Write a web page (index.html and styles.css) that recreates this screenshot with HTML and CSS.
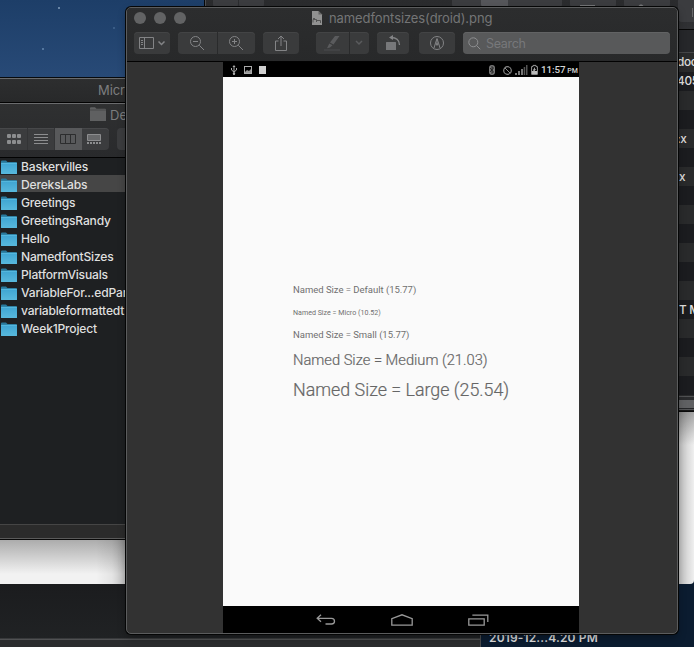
FILE: index.html
```html
<!DOCTYPE html>
<html lang="en">
<head>
<meta charset="utf-8">
<title>namedfontsizes(droid).png</title>
<link rel="stylesheet" href="styles.css">
</head>
<body>
<svg class="defs" width="0" height="0">
  <defs>
    <linearGradient id="blue" x1="0" y1="0" x2="0" y2="1"><stop offset="0" stop-color="#3fa5d2"/><stop offset="1" stop-color="#58b8dc"/></linearGradient>
    <symbol id="folder" viewBox="0 0 16 14">
      <path d="M0 1.5Q0 .5 1 .5H5L6.5 2H15Q16 2 16 3V6H0Z" fill="#28799c"/>
      <rect y="3" width="16" height="11" rx=".6" fill="url(#blue)"/>
      <path d="M0 3.3H16" stroke="#6ccbea" stroke-width=".6"/>
    </symbol>
  </defs>
</svg>
<main class="desktop">
  <div class="sky"></div>
  <div class="paper"></div>
  <div class="lower"></div>
  <div class="filename">2019-12...4.20 PM</div>

  <section class="back">
    <div class="back-tools"><i class="w1"></i><i class="w2"></i><i class="w3"></i><i class="w4"></i><i class="w5"></i><i class="w6"></i><i class="w7"></i></div>
    <div class="back-head"></div>
    <div class="back-rows">
      <p class="up">doc</p><p class="up">405</p><p></p><p></p><p class="x1">:x</p><p></p><p class="x2">x</p><p></p><p></p><p></p><p></p><p></p><p></p><p class="tm">T M</p><p></p><p></p><p></p><p></p>
    </div>
    <div class="back-scroll"></div>
  </section>

  <section class="word"><span>Micr</span></section>

  <section class="finder">
    <header>
      <div class="finder-title">
        <svg width="16" height="14" viewBox="0 0 16 14"><path d="M0 1Q0 .3 1 .3H5L6.5 1.8H15Q16 1.8 16 3V14H0Z" fill="#5f6061"/><path d="M0 3H16" stroke="#48494a"/></svg>
        <span>De</span>
      </div>
      <div class="views">
        <div class="seg">
          <b><svg width="14" height="10" fill="#8c8d8f"><rect width="4" height="4" rx="1"/><rect x="5" width="4" height="4" rx="1"/><rect x="10" width="4" height="4" rx="1"/><rect y="6" width="4" height="4" rx="1"/><rect x="5" y="6" width="4" height="4" rx="1"/><rect x="10" y="6" width="4" height="4" rx="1"/></svg></b>
          <b><svg width="14" height="10" stroke="#8c8d8f"><path d="M0 .5H14M0 3.5H14M0 6.5H14M0 9.5H14"/></svg></b>
          <b class="on"><svg width="16" height="10" fill="none" stroke="#2c2d2e"><path d="M.5.5H15.5V9.5H.5ZM5.5.5V9.5M10.5.5V9.5"/></svg></b>
          <b><svg width="14" height="10"><path d="M.5.5H13.5V6.5H.5Z" fill="#68696b" stroke="#8c8d8f"/><path d="M0 9H14" stroke="#8c8d8f" stroke-width="2" stroke-dasharray="2 1"/></svg></b>
        </div>
        <div class="next"></div>
      </div>
    </header>
    <ul>
      <li><svg><use href="#folder"/></svg><span>Baskervilles</span></li>
      <li class="sel"><svg><use href="#folder"/></svg><span>DereksLabs</span></li>
      <li><svg><use href="#folder"/></svg><span>Greetings</span></li>
      <li><svg><use href="#folder"/></svg><span>GreetingsRandy</span></li>
      <li><svg><use href="#folder"/></svg><span>Hello</span></li>
      <li><svg><use href="#folder"/></svg><span>NamedfontSizes</span></li>
      <li><svg><use href="#folder"/></svg><span>PlatformVisuals</span></li>
      <li><svg><use href="#folder"/></svg><span>VariableFor...edPar</span></li>
      <li><svg><use href="#folder"/></svg><span>variableformattedt</span></li>
      <li><svg><use href="#folder"/></svg><span>Week1Project</span></li>
    </ul>
    <footer></footer>
  </section>

  <section class="preview">
    <header>
      <div class="titlebar">
        <div class="lights"><i></i><i></i><i></i></div>
        <div class="title">
          <svg width="10" height="14"><path d="M0 0H6.5L10 3.5V14H0Z" fill="#919191"/><path d="M6.5 0V3.5H10Z" fill="#626262"/><path d="M1 11.5V8.5H4.5V11M4.5 9.5H8.5V12M1 7.5H3" fill="none" stroke="#555"/></svg>
          <span>namedfontsizes(droid).png</span>
        </div>
      </div>
      <div class="tools">
        <button class="side"><svg width="27" height="12" fill="none" stroke="#838486"><path d="M.5.5H14.5V11.5H.5ZM5.5.5V11.5M2 3.5H4M2 5.5H4M2 7.5H4"/><path d="M19.5 4.5L22.5 7.5L25.5 4.5" stroke-width="1.5"/></svg></button>
        <div class="pair">
          <button><svg width="16" height="16" fill="none" stroke="#838486"><circle cx="6.5" cy="6.5" r="5"/><path d="M10.3 10.3L15 15M4 6.5H9"/></svg></button>
          <button><svg width="16" height="16" fill="none" stroke="#838486"><circle cx="6.5" cy="6.5" r="5"/><path d="M10.3 10.3L15 15M4 6.5H9M6.5 4V9"/></svg></button>
        </div>
        <button class="share"><svg width="12" height="16" fill="none" stroke="#838486"><path d="M3.5 6H.5V15.5H11.5V6H8.5M6 11V1M3 4L6 1L9 4"/></svg></button>
        <div class="pen">
          <button><svg width="18" height="16"><path d="M12 1H16.5L10.5 9.5L7 7.5ZM6.3 8.4L9.5 10.3L7 12.5L4 13.3Z" fill="#5a5b5d"/><path d="M1 15H17" stroke="#4b4c4e"/></svg></button>
          <button><svg width="8" height="6" fill="none" stroke="#5a5b5d" stroke-width="1.5"><path d="M1 1L4 4L7 1"/></svg></button>
        </div>
        <button class="rotate"><svg width="15" height="16"><rect y="7" width="10" height="8" rx=".6" fill="#77787a"/><path d="M5 2.5C10 2.5 13.5 4.5 13.5 10" fill="none" stroke="#838486" stroke-width="1.3"/><path d="M3 2.5L7 0V5Z" fill="#838486"/></svg></button>
        <button class="mark"><svg width="14" height="14" fill="none" stroke="#838486"><circle cx="7" cy="7" r="6.5"/><path d="M4 12L5.5 7L7 2.5L8.5 7L10 12M7 3V8" /><circle cx="7" cy="8.4" r=".8" fill="#838486"/></svg></button>
        <div class="search"><svg width="13" height="13" fill="none" stroke="#8e8f91"><circle cx="5.3" cy="5.3" r="4.5"/><path d="M8.6 8.6L12.3 12.3"/></svg><span>Search</span></div>
      </div>
    </header>
    <div class="canvas">
      <div class="phone">
        <div class="status">
          <svg width="38" height="10">
            <g fill="none" stroke="#aaa"><path d="M5 1V10M2.5 3V5L5 7L7.5 5V3"/><rect x="15.5" y="1.5" width="7" height="7"/></g><circle cx="5" cy="8.7" r="1.2" fill="#aaa"/><path d="M3.5 2L5 0L6.5 2Z" fill="#aaa"/><path d="M16 7L18 5L20 6L22 4V8H16Z" fill="#999"/><rect x="30" y="1" width="7" height="8" fill="#d0d0d0"/>
          </svg>
          <span class="fill"></span>
          <svg width="50" height="11">
            <rect x="1" y="0" width="6" height="10" rx="3" fill="#777"/><path d="M2 3L5.5 7L4 8.5V1.5L5.5 3L2 7" fill="none" stroke="#151515" stroke-width=".8"/>
            <circle cx="19.5" cy="5.5" r="3.8" fill="none" stroke="#888" stroke-width="1.2"/><path d="M17 3L22 8" stroke="#888"/>
            <g fill="#777"><rect x="27" y="8" width="2" height="2"/><rect x="30" y="6" width="2" height="4"/><rect x="33" y="4" width="2" height="6"/></g><rect x="35.7" y="2" width="1.5" height="8" fill="#555"/><rect x="38" y="0" width="1.5" height="10" fill="#555"/>
            <path d="M43.6 1.6H45V.4H48V1.6H49.4V9.4H43.6Z" fill="none" stroke="#999"/><rect x="44" y="6" width="5" height="3" fill="#bbb"/><path d="M45 5L47 2V4H48L46 7Z" fill="#aaa"/>
          </svg>
          <span class="clock">11:57 <small>PM</small></span>
        </div>
        <div class="labels">
          <p class="default"><span>Named Size = Default (15.77)</span></p>
          <p class="micro"><span>Named Size = Micro (10.52)</span></p>
          <p class="small"><span>Named Size = Small (15.77)</span></p>
          <p class="medium"><span>Named Size = Medium (21.03)</span></p>
          <p class="large"><span>Named Size = Large (25.54)</span></p>
        </div>
        <div class="nav">
          <svg width="20" height="12" fill="none" stroke="#999" stroke-width="1.3"><path d="M5 .8L1.2 4.3L5 7.8M1.5 4.3H15.5Q18.5 4.3 18.5 7.3Q18.5 10 15.5 10H9.5"/></svg>
          <svg width="22" height="12" fill="none" stroke="#999" stroke-width="1.3"><path d="M.8 11.2V4.6L11 .8L21.2 4.6V11.2Z"/></svg>
          <svg width="21" height="12" fill="none" stroke="#999" stroke-width="1.3"><path d="M.8 4.8H16.2V11.2H.8ZM5 1.8V1.2H19.8V8"/></svg>
        </div>
      </div>
    </div>
  </section>
</main>
</body>
</html>
```
FILE: styles.css
```css
* { box-sizing: border-box; }
body { margin: 0; font-family: Inter, "Liberation Sans", sans-serif; }
p, ul { margin: 0; padding: 0; }
svg { display: block; flex: none; overflow: visible; }
.defs { position: absolute; }
button { border: 0; padding: 0; font: inherit; }

.desktop { position: relative; width: 694px; height: 647px; overflow: hidden; background: #0b1c30; }
.sky {
  position: absolute; left: 0; top: 0; width: 205px; height: 78px;
  background:
    radial-gradient(circle at 59px 8px, #7894b2 0 .6px, transparent 1.2px),
    radial-gradient(circle at 43px 49px, #5e81a8 0 .6px, transparent 1.2px),
    radial-gradient(circle at 114px 28px, #4b6f98 0 .5px, transparent 1px),
    linear-gradient(#1d3e68, #284a77);
}
.paper {
  position: absolute; left: 0; top: 410px; width: 694px; height: 174px;
  border-radius: 0 0 4px 0;
  background:
    linear-gradient(90deg, transparent 96px, rgba(0,0,0,.06) 112px, rgba(0,0,0,.22) 126px, rgba(0,0,0,.22) 678px, transparent 694px),
    linear-gradient(#a0a0a0, #f0f0f0 35px) 678px 0 / 16px 174px no-repeat,
    linear-gradient(#acacac 130px, #f2f2f2 164px);
}
.lower {
  position: absolute; left: 0; top: 584px; width: 481px; height: 63px;
  border-right: 1px solid #4b4c4e;
  background: linear-gradient(#1b1c1e, #202224 54px, #505153 55px, #505153 56px, #2b2c2e 56px);
}
.filename {
  position: absolute; left: 489px; top: 630px;
  color: #dedede; font-size: 12px; line-height: 16px; font-weight: 600; letter-spacing: .15px; white-space: nowrap;
}

.back {
  position: absolute; left: 204px; top: 0; width: 490px; height: 412px;
  display: flex; flex-direction: column;
  border-left: 1px solid #060708; border-bottom: 1px solid #0a0a0a;
  background: #202124; overflow: hidden;
}
.back-tools { height: 30px; flex: none; display: flex; background: linear-gradient(#2a2b2d, #303134); border-bottom: 1px solid #050505; border-left: 1px solid #4d4e50; }
.back-tools i { flex: none; height: 8px; background: #3b3c3f; border-radius: 0 0 4px 4px; }
.back-tools .w1 { width: 25px; margin-left: 7px; }
.back-tools .w2 { width: 25px; margin-left: 1px; }
.back-tools .w3 { width: 29px; margin-left: 188px; }
.back-tools .w4 { width: 81px; background: linear-gradient(90deg, #55565a 27px, #3b3c3f 27px); }
.back-tools .w5 { width: 46px; margin-left: 8px; background: linear-gradient(#747577, #747577) 10px 5px / 15px 1px no-repeat, #3b3c3f; }
.back-tools .w6 { width: 46px; margin-left: 8px; background: radial-gradient(circle at 17px 7px, #77787a 0 2px, #3b3c3f 3px); }
.back-tools .w7 { width: 40px; height: 22px; margin-left: 8px; background: linear-gradient(#67686a, #67686a) 14px 8px / 1px 9px no-repeat, #3b3c3f; }
.back-head { height: 23px; flex: none; background: #26272a; border-bottom: 1px solid #454648; }
.back-rows { height: 343px; flex: none; overflow: hidden; background: repeating-linear-gradient(#292a2b 0 19px, #1b1c1f 19px 38px); }
.back-rows p { height: 19px; padding-left: 473px; color: #dedede; font-size: 11.8px; line-height: 20px; font-weight: 500; letter-spacing: -.3px; white-space: nowrap; }
.back-rows .up { line-height: 18px; padding-left: 472px; }
.back-rows .x1 { padding-left: 472px; }
.back-rows .x2 { padding-left: 474px; }
.back-rows .tm { padding-left: 474px; }
.back-scroll { height: 15px; background: linear-gradient(#505153 0 1px, #2a2b2d 1px 4px, #606163 4px 12px, #252628 12px 13px, #535456 13px 14px, #161616 14px); }

.word {
  position: absolute; left: 0; top: 77px; width: 126px; height: 26px;
  border-top: 1px solid #080a0c; border-bottom: 1px solid #020202;
  background: linear-gradient(#6a6b6c 0 1px, #2d2e2f 1px, #28292a);
  color: #7d7e7f; overflow: hidden;
}
.word span { display: block; padding-left: 98px; font-size: 13px; line-height: 24px; letter-spacing: -.1px; }

.finder { position: absolute; left: 0; top: 103px; width: 126px; height: 437px; display: flex; flex-direction: column; overflow: hidden; background: #1e2022; border-bottom: 1px solid #090909; }
.finder header { height: 55px; flex: none; background: linear-gradient(#2f3031, #292a2c); border-top: 1px solid #6b6c6e; border-bottom: 1px solid #020202; }
.finder-title { display: flex; gap: 4px; padding: 3px 0 0 90px; height: 24px; color: #7c7d7e; font-size: 13px; line-height: 16px; }
.views { display: flex; gap: 8px; }
.seg { display: flex; width: 109px; height: 22px; flex: none; border-radius: 0 4px 4px 0; overflow: hidden; background: #3b3c3e; box-shadow: inset 0 1px #47484a; }
.seg b { width: 27px; display: flex; align-items: center; justify-content: center; border-right: 1px solid #333436; }
.seg b:first-child { width: 28px; }
.seg b:last-child { border: 0; width: 24px; }
.seg .on { background: #58595b; border-color: #58595b; }
.next { width: 20px; height: 22px; flex: none; border-radius: 4px; background: #3b3c3e; }
.finder ul { height: 366px; flex: none; list-style: none; }
.finder li { display: flex; align-items: flex-start; gap: 4px; height: 18px; padding-left: 1px; color: #dfdfdf; font-size: 12.1px; line-height: 18px; font-weight: 500; letter-spacing: -.2px; white-space: nowrap; }
.finder li svg { width: 16px; height: 14px; margin-top: 2px; }
.finder .sel { background: linear-gradient(#464646, #464646) 0 0 / 100% 17px no-repeat; margin-top: -1px; padding-top: 1px; height: 19px; }
.finder footer { height: 15px; background: #2b2b2b; border-top: 1px solid #454545; border-bottom: 1px solid #5b5b5b; }

.preview {
  position: absolute; left: 126px; top: 7px; width: 552px; height: 627px;
  border: 1px solid #5b5c5d; border-radius: 5px; overflow: hidden;
  box-shadow: 0 0 0 1px #050606, 0 4px 8px rgba(0,0,0,.3);
  background: #323232;
}
.preview > header { height: 54px; border-bottom: 1px solid #020202; background: linear-gradient(#2c2d2e, #28292a); }
.titlebar { display: flex; height: 24px; align-items: flex-start; }
.lights { display: flex; gap: 8px; padding: 4px 0 0 7px; width: 185px; }
.lights i { width: 12px; height: 12px; border-radius: 50%; background: #626364; }
.title { display: flex; gap: 7px; padding-top: 3px; color: #747576; font-size: 13px; line-height: 15px; letter-spacing: -.09px; white-space: nowrap; }
.tools { display: flex; padding-left: 7px; }
.tools button, .pair, .pen { height: 22px; }
.tools button { display: flex; align-items: center; justify-content: center; border-radius: 4px; background: #3a3b3c; box-shadow: inset 0 1px #434445; }
.side { width: 36px; }
.pair { display: flex; gap: 1px; margin-left: 8px; }
.pair button { width: 37px; }
.tools .pair button:first-child { width: 39px; border-radius: 4px 0 0 4px; }
.tools .pair button:last-child { border-radius: 0 4px 4px 0; }
.pair svg { margin-right: 1px; }
.share { width: 36px; margin-left: 8px; }
.pen { display: flex; gap: 1px; margin-left: 17px; }
.pen button:first-child { width: 33px; }
.pen button:last-child { width: 19px; }
.tools .pen button:first-child { border-radius: 4px 0 0 4px; }
.tools .pen button:last-child { border-radius: 0 4px 4px 0; }
.pen button:first-child svg, .pen button:last-child svg { margin-right: 2px; }
.rotate { width: 32px; margin-left: 8px; }
.mark { width: 36px; margin-left: 10px; }
.search { display: flex; align-items: center; gap: 5px; width: 207px; height: 22px; margin-left: 8px; padding-left: 5px; border-radius: 4px; background: #58595a; box-shadow: inset 0 1px #626364; color: #77787a; font-size: 12.5px; letter-spacing: -.3px; }

.canvas { padding-left: 96px; }
.phone { width: 356px; height: 571px; display: flex; flex-direction: column; background: #fafafa; }
.status { display: flex; height: 15px; flex: none; align-items: center; padding: 1px 2px 0 6px; background: #000; color: #d5d5d5; font-family: Roboto, sans-serif; }
.fill { flex: 1; }
.clock { display: flex; align-items: baseline; gap: 2px; margin-left: 3px; width: 36px; font-size: 9.8px; line-height: 13px; font-weight: 500; white-space: nowrap; letter-spacing: -.1px; }
.clock small { font-size: 7px; letter-spacing: 0; }
.labels { flex: 1; padding: 202px 0 0 70px; color: #707070; font-family: Roboto, sans-serif; white-space: nowrap; }
.labels p { display: flex; align-items: center; }
.default { height: 20px; font-size: 9.5px; letter-spacing: -.02px; }
.micro { height: 26px; font-size: 7.1px; }
.small { height: 18px; font-size: 9.5px; letter-spacing: -.03px; }
.medium { height: 33px; font-size: 14.7px; }
.large { height: 26px; font-size: 17.85px; }
.labels .medium, .labels .large { color: #666; font-weight: 300; -webkit-text-stroke: .2px #666; }
.nav { display: flex; height: 27px; flex: none; align-items: center; padding-left: 93px; background: #000; }
.nav svg:nth-child(2) { margin-left: 55px; }
.nav svg:nth-child(3) { margin-left: 55px; }
```
